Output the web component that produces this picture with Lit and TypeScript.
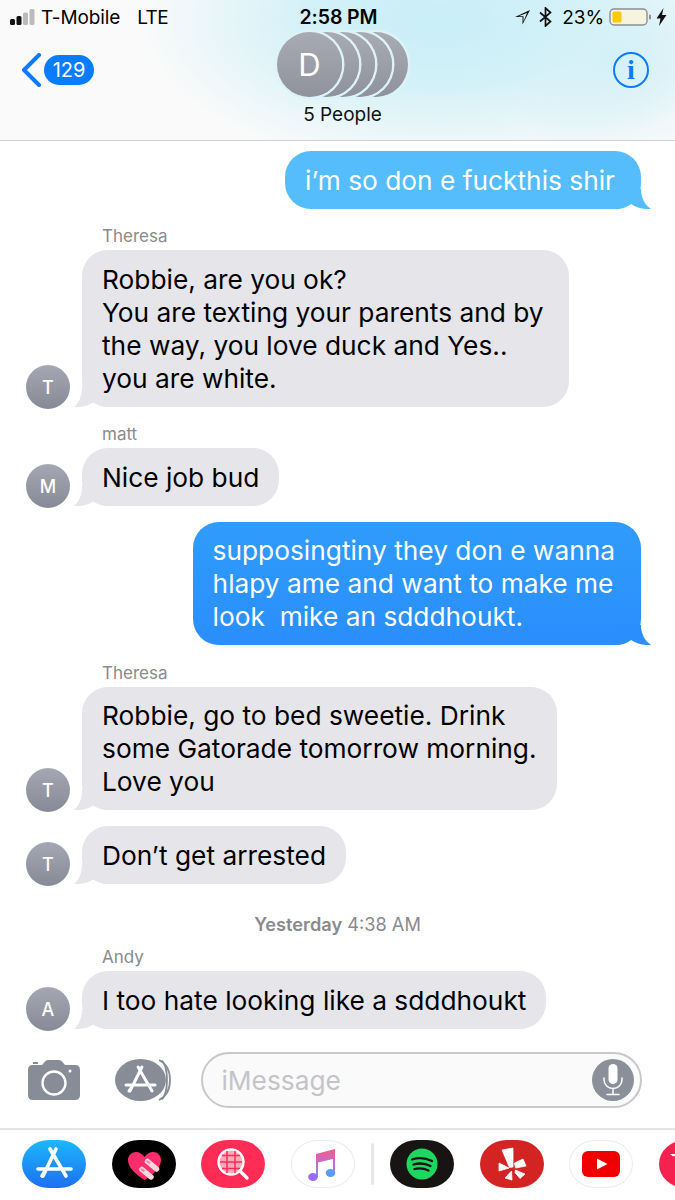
import { LitElement, html, svg, css } from 'lit';
import { customElement } from 'lit/decorators.js';

interface Message {
  lines: string[];
  sent?: boolean;
  tone?: 'light' | 'deep';
  roomy?: boolean;
  from?: string;
  initial?: string;
}

const MESSAGES: Message[] = [
  { lines: ['i’m so don e fuckthis shir'], sent: true, tone: 'light' },
  {
    from: 'Theresa',
    initial: 'T',
    roomy: true,
    lines: ['Robbie, are you ok?', 'You are texting your parents and by', 'the way, you love duck and Yes..', 'you are white.'],
  },
  { from: 'matt', initial: 'M', lines: ['Nice job bud'] },
  {
    lines: ['supposingtiny they don e wanna', 'hlapy ame and want to make me', 'look  mike an sdddhoukt.'],
    sent: true,
    tone: 'deep',
  },
  {
    from: 'Theresa',
    initial: 'T',
    lines: ['Robbie, go to bed sweetie. Drink', 'some Gatorade tomorrow morning.', 'Love you'],
  },
  { initial: 'T', lines: ['Don’t get arrested'] },
];

const LAST: Message = { from: 'Andy', initial: 'A', lines: ['I too hate looking like a sdddhoukt'] };

// sent bubbles have a slightly longer tail, so the curve starts further from the tip
const tailReceived = html`<svg class="tail" viewBox="0 0 36 20" width="36" height="20">
  <path d="M8 0C8 9 5 16 0 20C7 20.500 14 19 20 15C24 18 29 20 36 20V0Z" fill="currentColor" />
</svg>`;
const tailSent = html`<svg class="tail" viewBox="0 0 36 20" width="36" height="20">
  <path d="M10 0C10 9 6 16 0 20C7 20.500 14 19 20 15C24 18 29 20 36 20V0Z" fill="currentColor" />
</svg>`;

const appStoreGlyph = svg`
  <path d="M34 9L21 36M28 9L44 36M16 29H49M20 36L23 31" fill="none" stroke="#fff" stroke-width="3.6" stroke-linecap="round" />`;

@customElement('app-root')
export class AppRoot extends LitElement {
  static styles = css`
    :host {
      display: block;
      width: 675px;
      height: 1200px;
      overflow: hidden;
      background: #fff;
      font-family: Inter, 'Liberation Sans', sans-serif;
      color: #000;
    }

    .page {
      height: 1200px;
      display: flex;
      flex-direction: column;
    }

    /* header */
    .header {
      height: 140px;
      flex: none;
      border-bottom: 1px solid #cfcfd2;
      background:
        radial-gradient(ellipse 300px 150px at 440px 20px, #c8eef7 0%, #d4f1f8 45%, rgba(222, 244, 250, 0) 100%),
        radial-gradient(ellipse 130px 100px at 620px 60px, #d3f0f7 0%, rgba(222, 244, 250, 0) 100%),
        #fafafa;
    }

    .status {
      height: 32px;
      display: grid;
      grid-template-columns: 1fr auto 1fr;
      align-items: center;
      padding: 2px 8px 0 10px;
      box-sizing: border-box;
      font-size: 19px;
      letter-spacing: -0.1px;
    }

    .status-left {
      display: flex;
      align-items: center;
    }

    .bars {
      margin-right: 6px;
    }

    .lte {
      margin-left: 17px;
      letter-spacing: -0.6px;
    }

    .time {
      font-size: 19.5px;
      font-weight: 600;
    }

    .status-right {
      display: flex;
      align-items: center;
      justify-content: flex-end;
    }

    .bt {
      margin-left: 8px;
    }

    .bolt {
      margin-left: 4px;
    }

    .pct {
      margin: 0 5px 0 10px;
    }

    .nav {
      height: 107px;
      display: grid;
      grid-template-columns: 1fr auto 1fr;
      padding: 0 11px 0 21px;
    }

    .back {
      display: flex;
      align-items: center;
      gap: 3px;
      height: 34px;
      margin-top: 21px;
    }

    .count {
      width: 50px;
      height: 30px;
      border-radius: 15px;
      background: #0a7cff;
      color: #fff;
      font-size: 20px;
      line-height: 30px;
      text-align: center;
    }

    .group {
      display: flex;
      flex-direction: column;
      align-items: center;
    }

    .stack {
      display: flex;
      width: 131px;
    }

    .face {
      position: relative;
      width: 65px;
      height: 65px;
      flex: none;
      border-radius: 50%;
      background: linear-gradient(#a9abb4, #8f919c);
      box-shadow: 0 0 0 2.5px #ddf3f8;
      margin-left: -48.5px;
      color: #fff;
      font-size: 31px;
      line-height: 65px;
      text-align: center;
    }

    .face:nth-child(1) {
      margin-left: 0;
      z-index: 5;
    }

    .face:nth-child(2) {
      z-index: 4;
    }

    .face:nth-child(3) {
      z-index: 3;
    }

    .face:nth-child(4) {
      z-index: 2;
    }

    .face:nth-child(5) {
      z-index: 1;
    }

    .people {
      font-size: 19px;
      line-height: 24px;
      margin-top: 6px;
      color: #111;
    }

    .info {
      justify-self: end;
      width: 36px;
      height: 36px;
      margin: 20px 15px 0 0;
      box-sizing: border-box;
      border: 2px solid #0a7cff;
      border-radius: 50%;
      color: #0a7cff;
      font-family: 'Liberation Serif', serif;
      font-weight: 700;
      font-size: 28px;
      line-height: 32px;
      text-align: center;
    }

    /* conversation */
    .messages {
      flex: 1;
      display: flex;
      flex-direction: column;
      gap: 16px;
      padding-top: 10px;
      overflow: hidden;
    }

    .from {
      font-size: 17px;
      line-height: 20px;
      color: #8a8a8f;
      margin: 1.5px 0 4px 102px;
    }

    .row {
      display: flex;
      align-items: flex-end;
      padding-left: 26px;
      gap: 12px;
    }

    .row.sent {
      justify-content: flex-end;
      padding: 0 34px 0 0;
    }

    .avatar {
      width: 44px;
      height: 44px;
      flex: none;
      margin-bottom: -2px;
      border-radius: 50%;
      background: linear-gradient(#a5a8b2, #878a96);
      color: #fff;
      font-size: 18px;
      font-weight: 500;
      line-height: 45px;
      text-align: center;
    }

    .bubble {
      position: relative;
      isolation: isolate;
      padding: 12.75px 20px 11.75px;
      border-radius: 26px;
      background: #e5e5ea;
      color: #000;
      font-size: 26.3px;
      line-height: 33px;
      white-space: pre;
    }

    .bubble.roomy {
      padding-right: 25px;
    }

    /* sits under the text, a descender on the last line reaches into it */
    .bubble .tail {
      position: absolute;
      z-index: -1;
      left: -8px;
      bottom: 0;
      color: #e5e5ea;
    }

    .sent .bubble {
      color: #fff;
      padding-right: 26px;
    }

    .sent .bubble .tail {
      left: auto;
      right: -10px;
      transform: scaleX(-1);
    }

    .bubble.light {
      background: #55bdfb;
    }

    .bubble.light .tail {
      color: #55bdfb;
    }

    .bubble.deep {
      background: linear-gradient(#2f9cfb, #2a8efc);
    }

    .bubble.deep .tail {
      color: #2a8efc;
    }

    .stamp {
      margin: 14.5px 0 -4.5px;
      font-size: 18.2px;
      line-height: 20px;
      color: #8a8a8f;
      text-align: center;
    }

    .stamp b {
      font-weight: 600;
    }

    /* composer */
    .composer {
      flex: none;
      display: flex;
      align-items: center;
      padding: 0 33px 20px 28px;
    }

    .camera {
      margin-right: 35px;
    }

    .apps {
      margin-right: 29px;
    }

    .field {
      flex: 1;
      height: 56px;
      box-sizing: border-box;
      display: flex;
      align-items: center;
      justify-content: space-between;
      padding: 0 6px 0 18.5px;
      border: 2px solid #c8c8cc;
      border-radius: 28px;
      background: #fafafa;
      font-size: 26.3px;
      color: #c4c4c8;
    }

    .mic {
      width: 42px;
      height: 42px;
      border-radius: 50%;
      background: #8a8f99;
      display: flex;
      align-items: center;
      justify-content: center;
    }

    /* app strip */
    .strip {
      flex: none;
      height: 72px;
      box-sizing: border-box;
      border-top: 2px solid #e4e4e6;
      padding: 10px 0 0 22px;
      display: flex;
      align-items: flex-start;
      gap: 25.5px;
      overflow: hidden;
    }

    .tile {
      width: 64px;
      height: 48px;
      flex: none;
      border-radius: 27px / 24px;
      overflow: hidden;
    }

    .tile svg {
      display: block;
    }

    .tile.store {
      background: linear-gradient(#1cb8fc, #1d6ff2);
    }

    .tile.heart {
      background: #000;
    }

    .tile.search {
      background: #ff2d55;
    }

    .tile.music,
    .tile.video {
      box-sizing: border-box;
      background: #fff;
      border: 1px solid #ececee;
    }

    .tile.spotify {
      background: #191414;
    }

    .tile.yelp {
      background: #d32323;
    }

    .tile.more {
      background: #f5224f;
    }

    .divider {
      width: 3px;
      height: 42px;
      flex: none;
      margin: 3px -9.5px 0 -9px;
      background: #e6e6eb;
      border-radius: 2px;
    }
  `;

  private renderMessage(m: Message) {
    return html`
      <div>
        ${m.from ? html`<div class="from">${m.from}</div>` : ''}
        <div class="row ${m.sent ? 'sent' : ''}">
          ${m.initial ? html`<div class="avatar">${m.initial}</div>` : ''}
          <div class="bubble ${m.tone ?? ''} ${m.roomy ? 'roomy' : ''}">${m.sent ? tailSent : tailReceived}${m.lines.join('\n')}</div>
        </div>
      </div>
    `;
  }

  private renderStatus() {
    return html`
      <div class="status">
        <div class="status-left">
          <svg class="bars" width="25" height="18" viewBox="0 0 25 18">
            <rect x="0" y="11" width="5" height="6" rx="1.500" fill="#111" />
            <rect x="6.500" y="8" width="5" height="9" rx="1.500" fill="#111" />
            <rect x="13" y="4.500" width="5" height="12.500" rx="1.500" fill="#b9bbbd" />
            <rect x="19.500" y="1" width="5" height="16" rx="1.500" fill="#b9bbbd" />
          </svg>
          <span>T-Mobile</span><span class="lte">LTE</span>
        </div>
        <div class="time">2:58 PM</div>
        <div class="status-right">
          <svg width="17" height="17" viewBox="0 0 17 17">
            <path d="M16 1L1 8H8.500V15.500Z M13 4L4.500 7.200H9.500V12.500Z" fill="#111" fill-rule="evenodd" />
          </svg>
          <svg class="bt" width="13" height="20" viewBox="0 0 13 20">
            <path d="M1 5.500L11.500 14.500L6.500 19V1L11.500 5.500L1 14.500" fill="none" stroke="#111" stroke-width="1.700" />
          </svg>
          <span class="pct">23%</span>
          <svg width="43" height="18" viewBox="0 0 43 18">
            <rect x="1" y="1" width="37" height="16" rx="4" fill="#f6f4df" stroke="#8b8f93" stroke-width="1.400" />
            <rect x="3.500" y="3.500" width="9" height="11" rx="1.500" fill="#ffc800" />
            <rect x="40" y="6.500" width="2" height="5" rx="1" fill="#8b8f93" />
          </svg>
          <svg class="bolt" width="11" height="18" viewBox="0 0 11 18">
            <path d="M7.500 0L0.500 10.500H4.500L3 18L10.500 7H6Z" fill="#111" />
          </svg>
        </div>
      </div>
    `;
  }

  private renderStrip() {
    return html`
      <div class="strip">
        <div class="tile store">
          <svg width="64" height="48" viewBox="0 0 64 48">${appStoreGlyph}</svg>
        </div>
        <div class="tile heart">
          <svg width="64" height="48" viewBox="0 0 64 48">
            <path d="M32.500 40C22 33 16 27 16 20C16 15 20 12 24 12C27.500 12 30.500 14 32.500 17C34.500 14 37.500 12 41 12C45.500 12 49 15.500 49 20C49 27 43 33 32.500 40Z" fill="#ff2d6b" />
            <path d="M35.500 21.500L44.500 29M30 29.500L39 37" fill="none" stroke="#ffd6dd" stroke-width="5.500" stroke-linecap="round" />
            <path d="M35.500 21.500L37 22.700M30 29.500L31.500 30.700" fill="none" stroke="#ff7f9c" stroke-width="2.200" stroke-linecap="round" />
          </svg>
        </div>
        <div class="tile search">
          <svg width="64" height="48" viewBox="0 0 64 48">
            <circle cx="30" cy="22" r="12.500" fill="#ffa9bb" stroke="#fff" stroke-width="2.400" />
            <path d="M21 15.500H39M19 22H41M21 28.500H39M26 11V33M34 11V33" stroke="#ff2d55" stroke-width="1.500" fill="none" />
            <path d="M39 31L46 38" stroke="#fff" stroke-width="3.400" stroke-linecap="round" />
          </svg>
        </div>
        <div class="tile music">
          <svg width="62" height="46" viewBox="0 0 62 46">
            <defs>
              <linearGradient id="note" x1="0" y1="6" x2="0" y2="38" gradientUnits="userSpaceOnUse">
                <stop offset="0" stop-color="#fb5c74" />
                <stop offset="0.500" stop-color="#c56ad6" />
                <stop offset="1" stop-color="#5a9cf5" />
              </linearGradient>
            </defs>
            <path d="M24 13L43 8V32H41V18L26 21.500V36H24Z" fill="url(#note)" />
            <ellipse cx="21" cy="36" rx="4.800" ry="4" fill="#9a6cf0" />
            <ellipse cx="38.500" cy="32" rx="4.800" ry="4" fill="#5a9cf5" />
          </svg>
        </div>
        <div class="divider"></div>
        <div class="tile spotify">
          <svg width="64" height="48" viewBox="0 0 64 48">
            <circle cx="32" cy="24" r="15.500" fill="#1ed760" />
            <path d="M22 19.500C28 17.500 36 18 42 21M23.500 24.500C28.500 23 35.500 23.500 40.500 26M24.500 29C29 28 34.500 28.500 38.500 30.500" fill="none" stroke="#191414" stroke-width="2.300" stroke-linecap="round" />
          </svg>
        </div>
        <div class="tile yelp">
          <svg width="64" height="48" viewBox="0 0 64 48">
            <path d="M22 10L33 8V27L29.500 27.500Z M34.500 23L43 19L46 26L35.500 28Z M35.500 30L45 34L40 38.500L35 32.500Z M31.500 31L32 40L25 38Z M19 23L29 28L19 31Z" fill="#fff" stroke="#fff" stroke-width="0.800" stroke-linejoin="round" />
          </svg>
        </div>
        <div class="tile video">
          <svg width="62" height="46" viewBox="0 0 62 46">
            <rect x="12" y="10" width="38" height="26" rx="6" fill="#f00000" />
            <path d="M27 17.500L37.500 23L27 28.500Z" fill="#fff" />
          </svg>
        </div>
        <div class="tile more">
          <svg width="64" height="48" viewBox="0 0 64 48">
            <path d="M11 14H17V16.500L13.500 16Z" fill="#fff" />
          </svg>
        </div>
      </div>
    `;
  }

  render() {
    return html`
      <div class="page">
        <div class="header">
          ${this.renderStatus()}
          <div class="nav">
            <div class="back">
              <svg width="20" height="34" viewBox="0 0 20 34">
                <path d="M18 2L3 17L18 32" fill="none" stroke="#0a7cff" stroke-width="4" stroke-linecap="round" stroke-linejoin="round" />
              </svg>
              <div class="count">129</div>
            </div>
            <div class="group">
              <div class="stack">
                <div class="face">D</div>
                <div class="face"></div>
                <div class="face"></div>
                <div class="face"></div>
                <div class="face"></div>
              </div>
              <div class="people">5 People</div>
            </div>
            <div class="info">i</div>
          </div>
        </div>

        <div class="messages">
          ${MESSAGES.map((m) => this.renderMessage(m))}
          <div class="stamp"><b>Yesterday</b> 4:38 AM</div>
          ${this.renderMessage(LAST)}
        </div>

        <div class="composer">
          <svg class="camera" width="52" height="40" viewBox="0 0 52 40">
            <path d="M5 5H14L17 1.500Q18 0 20 0H31Q33 0 34 1.500L37 5H47Q52 5 52 10V35Q52 40 47 40H5Q0 40 0 35V10Q0 5 5 5Z" fill="#878c96" />
            <rect x="5" y="2" width="5" height="2" fill="#878c96" />
            <circle cx="26" cy="23" r="11.500" fill="none" stroke="#fff" stroke-width="2.400" />
            <circle cx="42" cy="11" r="1.500" fill="#fff" />
          </svg>
          <svg class="apps" width="57" height="42" viewBox="0 0 57 42">
            <path d="M44 1C52 5 55 13 55 21C55 29 52 37 44 41" fill="none" stroke="#878c96" stroke-width="1.800" />
            <path d="M47 1.500C51 6 52 13 52 21C52 29 51 36 47 40.500" fill="none" stroke="#878c96" stroke-width="1.800" />
            <ellipse cx="25.500" cy="21" rx="25.500" ry="21" fill="#878c96" />
            <path d="M27 8L15 32M23 8L37 32M11 26H40M14 32L17 28" fill="none" stroke="#fff" stroke-width="3" stroke-linecap="round" />
          </svg>
          <div class="field">
            <span>iMessage</span>
            <div class="mic">
              <svg width="20" height="32" viewBox="0 0 20 32">
                <rect x="5.500" y="0" width="9" height="20" rx="4.500" fill="#fff" />
                <path d="M1 14V15.500C1 21 5 24.500 10 24.500C15 24.500 19 21 19 15.500V14M10 24.500V30.500M4 30.500H16" fill="none" stroke="#fff" stroke-width="1.500" stroke-linecap="round" />
              </svg>
            </div>
          </div>
        </div>

        ${this.renderStrip()}
      </div>
    `;
  }
}
